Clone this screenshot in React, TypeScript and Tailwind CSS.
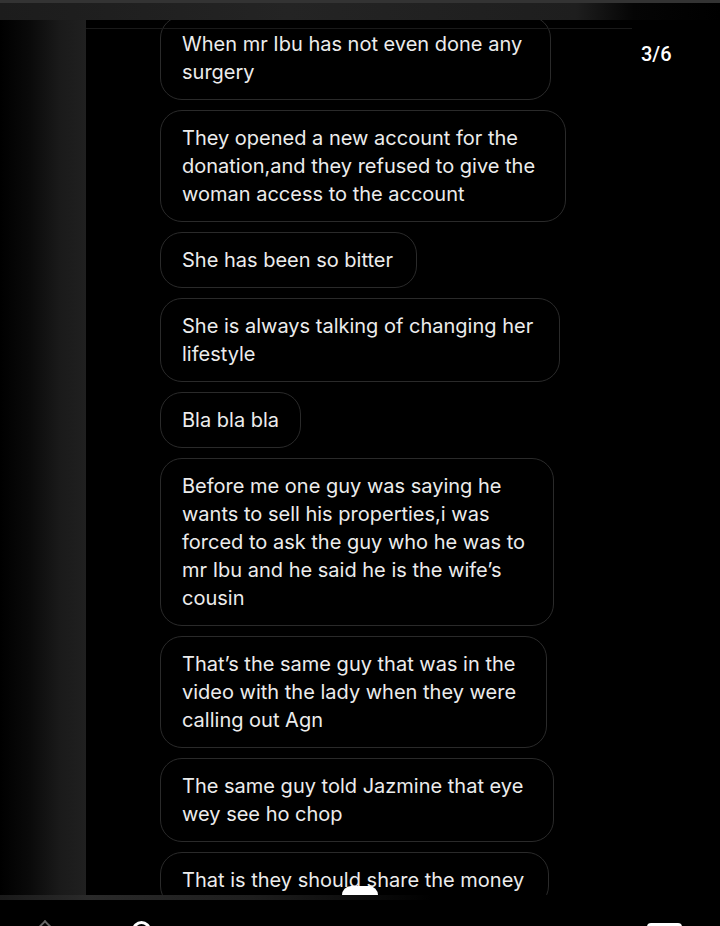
import React from "react";

const bubbles: { w: number; lines: string[] }[] = [
  { w: 391, lines: ["When mr Ibu has not even done any", "surgery"] },
  { w: 406, lines: ["They opened a new account for the", "donation,and they refused to give the", "woman access to the account"] },
  { w: 257, lines: ["She has been so bitter"] },
  { w: 400, lines: ["She is always talking of changing her", "lifestyle"] },
  { w: 141, lines: ["Bla bla bla"] },
  { w: 394, lines: ["Before me one guy was saying he", "wants to sell his properties,i was", "forced to ask the guy who he was to", "mr Ibu and he said he is the wife\u2019s", "cousin"] },
  { w: 387, lines: ["That\u2019s the same guy that was in the", "video with the lady when they were", "calling out Agn"] },
  { w: 394, lines: ["The same guy told Jazmine that eye", "wey see ho chop"] },
  { w: 389, lines: ["That is they should share the money"] },
];

export default function App() {
  return (
    <div className="relative w-[720px] h-[926px] overflow-hidden bg-black">
      {/* top strip */}
      <div className="h-[20px] w-full bg-[linear-gradient(to_right,#1c1c1c_0%,#242424_40%,#1e1e1e_80%,#050505_88%,#000_100%)] border-t-[3px] border-[#333]" />
      <div className="flex h-[875px]">
        {/* left blurred column */}
        <div className="w-[86px] h-full bg-[linear-gradient(to_right,#000_0%,#0a0a0a_35%,#1a1a1a_70%,#202020_100%)]" />
        {/* panel */}
        <div className="relative w-[546px] h-full overflow-hidden bg-black">
          <div className="absolute left-0 right-0 top-[8px] h-px bg-[#1a1a1a]" />
          <div
            className="flex flex-col items-start gap-[10px] pl-[74px] mt-[-4px]"
            style={{ fontFamily: "Inter, 'Liberation Sans', sans-serif" }}
          >
            {bubbles.map((b, i) => (
              <div
                key={i}
                className="box-border rounded-[22px] border border-[#2a2a2a] bg-black px-[21px] py-[13px] text-[20px] leading-[28px] text-[#ececec]"
                style={{ width: b.w }}
              >
                {b.lines.map((l, j) => (
                  <span key={j} className="block whitespace-nowrap">
                    {l}
                  </span>
                ))}
              </div>
            ))}
          </div>
        </div>
        {/* right column */}
        <div className="flex-1 h-full bg-black pt-[22px] pl-[9px]">
          <span
            className="text-[20px] leading-[24px] font-medium text-white"
            style={{ fontFamily: "Roboto, 'Liberation Sans', sans-serif" }}
          >
            3/6
          </span>
        </div>
      </div>
      {/* bottom strip */}
      <div className="h-[5px] w-full bg-[linear-gradient(to_right,#1a1a1a_0%,#2a2a2a_12%,#1e1e1e_35%,#000_60%)]" />
      {/* white semicircle over text */}
      <div className="absolute left-[342px] top-[886px] w-[36px] h-[18px] rounded-full bg-white [clip-path:inset(0_0_50%_0)]" />
      {/* bottom nav icons, cut off */}
      <div className="absolute left-[40px] top-[922px] w-[10px] h-[10px] border-l-2 border-t-2 border-[#666] rotate-45" />
      <div className="absolute left-[132px] top-[921px] w-[19px] h-[19px] rounded-full border-[3px] border-white" />
      <div className="absolute left-[647px] top-[923px] w-[35px] h-[20px] rounded-[4px] border-[3px] border-white" />
    </div>
  );
}
